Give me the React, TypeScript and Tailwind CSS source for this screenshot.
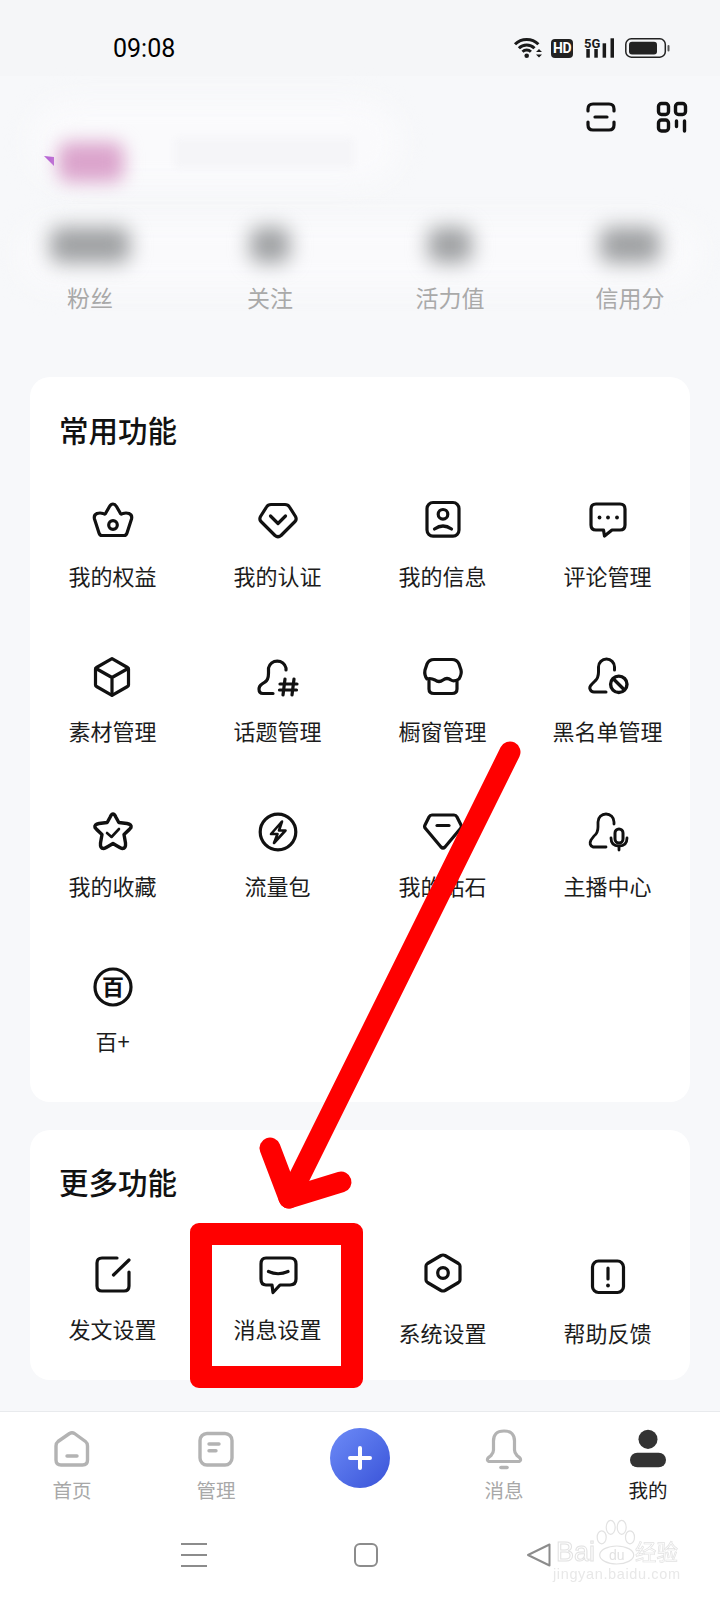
import React from "react";

const FONT = { fontFamily: '"Noto Sans CJK SC", "Noto Sans", sans-serif' } as const;

function Ico({ children, sw = 3.2, color = "#111" }: { children: React.ReactNode; sw?: number; color?: string }) {
  return (
    <svg width="44" height="44" viewBox="0 0 44 44" fill="none" stroke={color} strokeWidth={sw} strokeLinecap="round" strokeLinejoin="round">
      {children}
    </svg>
  );
}

const Crown = () => (<Ico><path d="M22 4Q24 4 25.5 6.5L29.5 13.5Q30.5 14.5 32 13.5Q35 12.5 38 13.5Q41.5 15 40.5 19L36 33Q35.3 35.5 33 35.5H11Q8.7 35.5 8 33L3.5 19Q2.5 15 6 13.5Q9 12.5 12 13.5Q13.5 14.5 14.5 13.5L18.5 6.5Q20 4 22 4Z" /><circle cx="22" cy="25" r="4.3" /></Ico>);
const Badge = () => (<Ico><path d="M15 4.5H29Q32 4.5 33.5 7L39.5 16.5Q41 19.5 39 21.5L25 35.5Q22 38 19 35.5L5 21.5Q3 19.5 4.5 16.5L10.5 7Q12 4.5 15 4.5Z" /><path d="M14.5 16L22 23.5L29.5 16" /></Ico>);
const Info = () => (<Ico><rect x="6" y="2.5" width="32" height="33.6" rx="6" /><circle cx="22" cy="14.3" r="4.8" /><path d="M13.5 29Q22 23 30.5 29" /></Ico>);
const Comment = () => (<Ico><path d="M10 4H34Q39 4 39 9V25Q39 30 34 30H26L18.5 36L17.5 30H10Q5 30 5 25V9Q5 4 10 4Z" /><circle cx="13.5" cy="17.5" r="1.9" fill="#111" stroke="none" /><circle cx="22" cy="17.5" r="1.9" fill="#111" stroke="none" /><circle cx="31" cy="17.5" r="1.9" fill="#111" stroke="none" /></Ico>);
const Cube = () => (<Ico><path d="M21 3.7L36.5 12.5Q37.5 13 37.5 14V30Q37.5 31 36.5 31.5L21 40.3L5.5 31.5Q4.5 31 4.5 30V14Q4.5 13 5.5 12.5Z" /><path d="M5 13.5L21 22.5L37 13.5M21 22.5V40" /></Ico>);
const Hash = () => (<Ico><path d="M30 15V13A9 9 0 0 0 12.5 13V18Q12.5 25 9 27L6 29Q3 31 3 34Q3 38.5 7 38.5H17" /><path d="M29 24L27 40M38 24L36 40M24 29H41M23.5 35H40.5" strokeWidth="3.2" /></Ico>);
const Store = () => (<Ico><path d="M13 4.5H31Q36 4.5 38 9L40 15Q41 19 38 24Q33 27 30 25Q26 22 22 25Q18 28 14 25Q10 23 6 24Q3 20 4 15L6 9Q8 4.5 13 4.5Z" /><path d="M8 26V34Q8 38.5 13 38.5H31Q36 38.5 36 34V26" /></Ico>);
const Block = () => (<Ico sw={3}><path d="M28.5 15V12A8 8 0 0 0 12.5 12V17Q12.5 23 9 26L6 29Q3 32 4 34Q5 37 8 37H20" /><circle cx="32.8" cy="29.3" r="8.2" strokeWidth="3.4" /><path d="M27.5 24L38 34.5" strokeWidth="3.4" /></Ico>);
const StarCheck = () => (<Ico sw={3.4}><path d="M22 4Q23.5 4 24.8 7L27.8 12.5L36 13.5Q41 14.5 40 17.5Q39 19 33 24.5L34.5 33Q35 38.5 31.5 38.5Q30 38.5 22 33.5Q14 38.5 12.5 38.5Q9 38.5 9.5 33L11 24.5Q5 19 4 17.5Q3 14.5 8 13.5L16.2 12.5L19.2 7Q20.5 4 22 4Z" /><path d="M16 23L20.5 27L28 19" strokeWidth="2.6" /></Ico>);
const Bolt = () => (<Ico><circle cx="22" cy="22" r="17.8" /><path d="M26 11.5L15 24H21.5L18 33L29.5 20.5H23Z" strokeWidth="2.6" /></Ico>);
const Diamond = () => (<Ico><path d="M11 5H33Q35 5 36 7L40 15Q41 17 39.5 18.5L24 37Q22 39 20 37L4.5 18.5Q3 17 4 15L8 7Q9 5 11 5Z" /><path d="M16 15.5H28" /></Ico>);
const Mic = () => (<Ico sw={2.8}><path d="M28 14V12A8 8 0 0 0 12 12V17Q12 23 8 26L5 30Q2.5 35 7 37H20" /><rect x="29" y="19" width="8" height="14" rx="4" strokeWidth="3" /><path d="M25 28Q25 36 33 36Q41 36 41 28M33 36V40" /></Ico>);
const Hundred = () => (
  <svg width="44" height="44" viewBox="0 0 44 44" fill="none">
    <circle cx="22" cy="22" r="18" stroke="#111" strokeWidth="3.2" />
    <text x="22" y="30" textAnchor="middle" fontSize="22" fontWeight="700" fill="#111" style={FONT}>百</text>
  </svg>
);
const Edit = () => (<Ico><path d="M26 5H11Q6 5 6 10V33Q6 38 11 38H33Q38 38 38 33V19" /><path d="M38 7L22.5 22" /></Ico>);
const Msg = () => (<Ico><path d="M10 5H34Q40 5 40 11V26Q40 32 34 32H24L17 39.5L16 32H10Q5 32 5 26V11Q5 5 10 5Z" /><path d="M12.5 18.5Q22 23 32 18.5" /></Ico>);
const Hex = () => (<Ico><path d="M20 4.5Q22 3.5 24 4.5L37.5 12.5Q39 13.5 39 15V29Q39 30.5 37.5 31.5L24 39.5Q22 40.5 20 39.5L6.5 31.5Q5 30.5 5 29V15Q5 13.5 6.5 12.5Z" /><circle cx="22" cy="22" r="5.3" /></Ico>);
const Help = () => (<Ico><rect x="6.5" y="6" width="31" height="31.5" rx="6" /><path d="M22 13V24" /><circle cx="22" cy="30.5" r="1.9" fill="#111" stroke="none" /></Ico>);

const Gray = "#b3b3b3";
const Home = () => (<Ico color={Gray} sw={3.4}><path d="M19.5 5.5Q22 4 24.5 5.5L35.5 13.5Q37.5 15 37.5 18V32Q37.5 37 32.5 37H11Q6 37 6 32V18Q6 15 8 13.5Z" /><path d="M17 28H27" /></Ico>);
const Manage = () => (<Ico color={Gray} sw={3.4}><rect x="6" y="5.5" width="32" height="31.5" rx="7" /><path d="M15 16H25M15 22.7H22" /></Ico>);
const Bell = () => (<Ico color={Gray} sw={3.2}><path d="M22 3Q11 3 11.5 14V22Q11.5 25 9 27.5L6 30Q4.5 32.5 7 33.5H37Q39.5 32.5 38 30L35 27.5Q32.5 25 32.5 22V14Q33 3 22 3Z" /><path d="M19 39.5H25" strokeWidth="3.6" /></Ico>);
const Person = () => (
  <svg width="44" height="44" viewBox="0 0 44 44" fill="#333">
    <ellipse cx="22" cy="11.3" rx="9.5" ry="9.6" />
    <rect x="4" y="24.7" width="36" height="14.6" rx="7.3" />
  </svg>
);

function Feature({ icon, label, outer = "", gap = "mt-[16px]" }: { icon: React.ReactNode; label: string; outer?: string; gap?: string }) {
  return (
    <div className={`flex flex-col items-center ${outer}`}>
      {icon}
      <span className={`${gap} text-[22px] leading-[30px] text-[#1c1c1c] whitespace-nowrap`}>{label}</span>
    </div>
  );
}

const common: [React.ReactNode, string][] = [
  [<Crown />, "我的权益"], [<Badge />, "我的认证"], [<Info />, "我的信息"], [<Comment />, "评论管理"],
  [<Cube />, "素材管理"], [<Hash />, "话题管理"], [<Store />, "橱窗管理"], [<Block />, "黑名单管理"],
  [<StarCheck />, "我的收藏"], [<Bolt />, "流量包"], [<Diamond />, "我的钻石"], [<Mic />, "主播中心"],
  [<Hundred />, "百+"],
];

function Stat({ w, label }: { w: string; label: string }) {
  return (
    <div className="relative flex flex-col items-center">
      <div className="h-[36px] flex items-center">
        <div className={`${w} h-[36px] bg-[#9fa1a3] rounded-[10px] blur-[10px]`} />
      </div>
      <span className="mt-[18px] text-[23px] leading-[32px] text-[#a9a9a9]">{label}</span>
    </div>
  );
}

function NavItem({ icon, label, active }: { icon: React.ReactNode; label: string; active?: boolean }) {
  return (
    <div className="flex flex-col items-center">
      {icon}
      <span className={`mt-[4px] text-[19.5px] leading-[28px] ${active ? "text-[#1c1c1c]" : "text-[#a8a8a8]"}`}>{label}</span>
    </div>
  );
}

export default function App() {
  return (
    <div className="relative w-[720px] h-[1600px] overflow-hidden bg-[#f7f8fa] flex flex-col" style={FONT}>
      {/* status bar */}
      <div className="h-[76px] shrink-0 bg-[#f5f6f8] flex items-start pl-[113px] pt-[37px]">
        <span className="mt-[1px] text-[25px] leading-[22px] text-black font-['Roboto'] w-[400px]">09:08</span>
        <svg width="31" height="22" viewBox="0 0 31 22" fill="none" stroke="#1a1a1a" strokeWidth="3">
          <path d="M2 7.3A16.5 16.5 0 0 1 25.4 7.3" />
          <path d="M5.9 11.2A11 11 0 0 1 21.5 11.2" />
          <path d="M9.5 14.8A6 6 0 0 1 17.9 14.8" />
          <circle cx="13.7" cy="18.7" r="2.3" fill="#1a1a1a" stroke="none" />
          <path d="M26 12L29 15H23ZM26 20.5L23 17.5H29Z" fill="#1a1a1a" stroke="none" />
        </svg>
        <span className="ml-[7px] mt-[2px] w-[22px] h-[19px] rounded-[4px] bg-[#222] text-white text-[14px] leading-[19px] text-center font-bold font-['Roboto'] tracking-[-0.5px]">HD</span>
        <svg className="ml-[11px] -mt-[4px]" width="30" height="25" viewBox="0 -4 30 25" fill="#1a1a1a">
          <text x="0" y="10.5" fontSize="13" fontWeight="700" style={{ fontFamily: "Roboto, sans-serif" }}>5G</text>
          <rect x="2.3" y="12" width="3.5" height="8.7" />
          <rect x="10.3" y="12" width="3.5" height="8.7" />
          <rect x="18.6" y="6.3" width="3.5" height="14.4" />
          <rect x="26.5" y="1.3" width="3.5" height="19.4" />
        </svg>
        <svg className="ml-[11px] mt-[1px]" width="46" height="20" viewBox="0 0 46 20" fill="none">
          <rect x="0.8" y="0.8" width="39.5" height="18.4" rx="5.5" stroke="#222" strokeWidth="1.5" />
          <rect x="4" y="3.7" width="28" height="12.8" rx="3" fill="#222" />
          <rect x="42.5" y="7" width="2" height="6.5" rx="1" fill="#555" />
        </svg>
      </div>

      {/* header */}
      <div className="flex justify-end gap-[39px] pr-[32px] pt-[25px] h-[57px] shrink-0">
        <svg width="32" height="32" viewBox="0 0 32 32" fill="none" stroke="#111" strokeWidth="3.2" strokeLinecap="round">
          <path d="M3 10V8Q3 3 8 3H24Q29 3 29 8V10M3 21V24Q3 29 8 29H24Q29 29 29 24V21M10 16H22" />
        </svg>
        <svg width="32" height="32" viewBox="0 0 32 32" fill="none" stroke="#111" strokeWidth="3.4" strokeLinecap="round">
          <rect x="2.5" y="2.5" width="10" height="11" rx="3" />
          <rect x="19.5" y="2.5" width="10" height="11" rx="3" />
          <rect x="2.5" y="19" width="10" height="11" rx="3" />
          <path d="M20.5 20V25.5M28.5 20V30" />
        </svg>
      </div>

      <div className="relative h-[54px] shrink-0 flex items-start pl-[60px] pt-[9px]">
        <div className="absolute left-[30px] top-[-33px] w-[370px] h-[85px] rounded-[40px] bg-[#fafafc] blur-[14px]" />
        <svg className="absolute left-[44px] top-[23px]" width="11" height="10" viewBox="0 0 11 10">
          <path d="M0 0L10 1V10Z" fill="#b45fd6" />
        </svg>
        <div className="relative -ml-[2px] w-[66px] h-[40px] rounded-[10px] bg-[#dba4cc] blur-[9px]" />
        <div className="relative ml-[50px] -mt-[4px] w-[180px] h-[30px] rounded-[4px] bg-[#f5f5f8] blur-[3px]" />
      </div>

      <div className="relative grid grid-cols-4 mt-[40px] shrink-0">
        <div className="absolute left-[20px] right-[20px] top-[-6px] h-[66px] rounded-[30px] bg-[#fafafc] blur-[14px]" />
        <Stat w="w-[80px]" label="粉丝" />
        <Stat w="w-[40px]" label="关注" />
        <Stat w="w-[44px]" label="活力值" />
        <Stat w="w-[60px]" label="信用分" />
      </div>

      {/* common card */}
      <div className="mx-[30px] mt-[64px] bg-white rounded-[20px] pt-[32px] pb-[47px] shrink-0">
        <div className="pl-[29px] text-[29.5px] leading-[40px] font-medium text-[#111]">常用功能</div>
        <div className="mt-[51px] grid grid-cols-4 gap-y-[65px]">
          {common.map(([icon, label]) => (
            <Feature key={label} icon={icon} label={label} />
          ))}
        </div>
      </div>

      {/* more card */}
      <div className="mx-[30px] mt-[28px] bg-white rounded-[20px] pt-[31px] pb-[33px] shrink-0">
        <div className="pl-[29px] text-[29.5px] leading-[40px] font-medium text-[#111]">更多功能</div>
        <div className="mt-[52px] grid grid-cols-4">
          <Feature icon={<Edit />} label="发文设置" />
          <Feature icon={<Msg />} label="消息设置" />
          <Feature icon={<Hex />} label="系统设置" outer="-mt-[2px]" gap="mt-[22px]" />
          <Feature icon={<Help />} label="帮助反馈" outer="mt-[2px]" gap="mt-[18px]" />
        </div>
      </div>

      {/* bottom nav */}
      <div className="relative mt-[31px] flex-1 bg-white border-t border-[#e8eaed] pt-[16px]">
        <div className="grid grid-cols-5 h-[77px]">
          <NavItem icon={<Home />} label="首页" />
          <NavItem icon={<Manage />} label="管理" />
          <div className="flex justify-center">
            <div className="w-[60px] h-[60px] rounded-full bg-gradient-to-br from-[#6e8bf7] to-[#3a52d8] flex items-center justify-center">
              <svg width="26" height="26" viewBox="0 0 26 26" stroke="#fff" strokeWidth="4" strokeLinecap="round">
                <path d="M13 3V23M3 13H23" />
              </svg>
            </div>
          </div>
          <NavItem icon={<Bell />} label="消息" />
          <NavItem icon={<Person />} label="我的" active />
        </div>
        <div className="mt-[38px] pl-[181px] flex items-start">
          <svg width="26" height="24" viewBox="0 0 26 24" stroke="#8c8c8c" strokeWidth="2">
            <path d="M0 1H26M0 12H26M0 23H26" />
          </svg>
          <svg className="ml-[147px]" width="24" height="24" viewBox="0 0 24 24" fill="none" stroke="#8c8c8c" strokeWidth="2">
            <rect x="1" y="1" width="22" height="22" rx="5" />
          </svg>
          <svg className="ml-[149px]" width="24" height="24" viewBox="0 0 24 24" fill="none" stroke="#8c8c8c" strokeWidth="2" strokeLinejoin="round">
            <path d="M22.5 1.5V22.5L1 12Z" />
          </svg>
        </div>

        {/* watermark */}
        <svg className="absolute left-[550px] top-[107px] blur-[0.4px]" width="135" height="65" viewBox="0 0 135 65" fill="none">
          <text x="6" y="42" fontSize="27" fontWeight="400" fill="#fff" stroke="#e2e2e2" strokeWidth="1" style={{ fontFamily: '"Liberation Sans", sans-serif' }}>Bai</text>
          <g stroke="#e2e2e2" strokeWidth="1.2">
            <ellipse cx="51.7" cy="18.3" rx="4.5" ry="6.5" />
            <ellipse cx="60.7" cy="8.3" rx="4.5" ry="7" />
            <ellipse cx="71.7" cy="8.3" rx="4.5" ry="7" />
            <ellipse cx="80" cy="18.3" rx="4.5" ry="6.5" />
            <ellipse cx="66.7" cy="36" rx="17" ry="9" />
          </g>
          <text x="66.7" y="41" textAnchor="middle" fontSize="14" fill="#e2e2e2" style={{ fontFamily: '"Liberation Sans", sans-serif' }}>du</text>
          <text x="85" y="41" fontSize="21.5" fill="#fff" stroke="#e2e2e2" strokeWidth="0.7" style={FONT}>经验</text>
          <text x="3" y="60" fontSize="14.5" fill="#e8e8e8" textLength="127" style={{ fontFamily: '"Liberation Sans", sans-serif' }}>jingyan.baidu.com</text>
        </svg>
      </div>

      {/* red annotation */}
      <div className="absolute left-[190px] top-[1223px] w-[173px] h-[165px] border-[22px] border-[#ff0000] rounded-[9px]" />
      <svg className="absolute left-0 top-0 pointer-events-none" width="720" height="1600" viewBox="0 0 720 1600" fill="none" stroke="#ff0000" strokeWidth="21" strokeLinecap="round" strokeLinejoin="round">
        <path d="M510 752L289 1198" />
        <path d="M270 1148L289 1198L341 1182" />
      </svg>
    </div>
  );
}
